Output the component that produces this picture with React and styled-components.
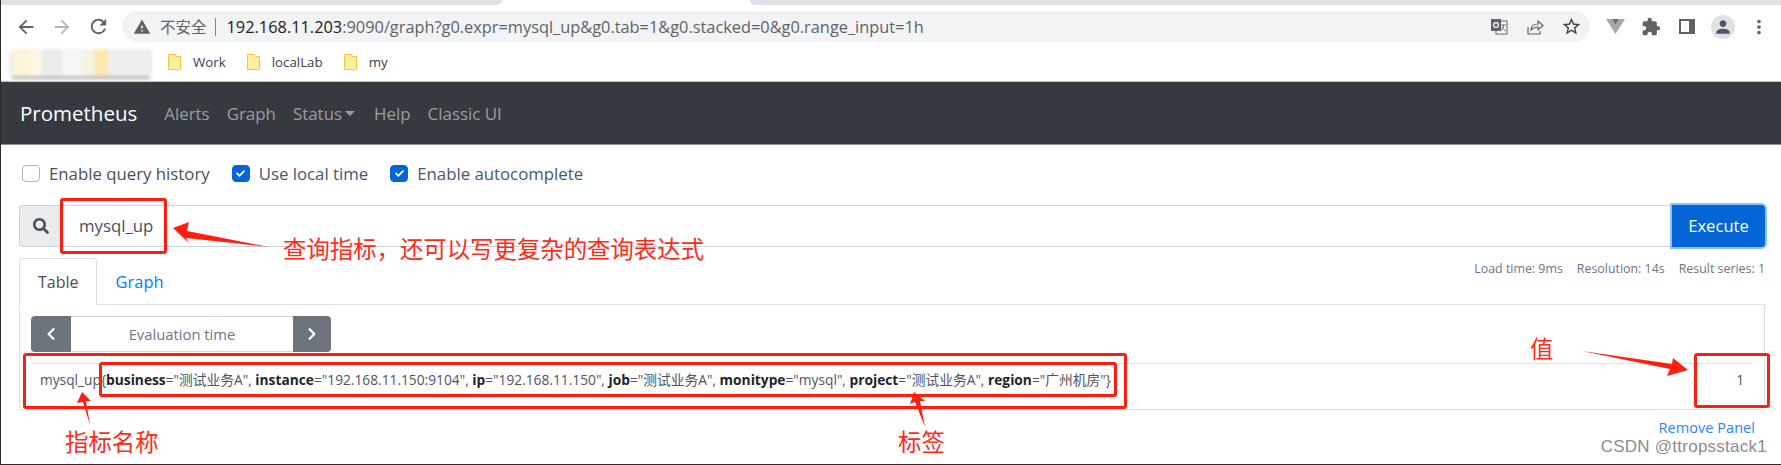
import React from "react";
import styled, { createGlobalStyle } from "styled-components";
import {
  MdArrowBack,
  MdArrowForward,
  MdRefresh,
  MdWarning,
  MdStarBorder,
  MdExtension,
  MdMoreVert,
  MdPerson,
} from "react-icons/md";
import { FaSearch, FaChevronLeft, FaChevronRight, FaCheck } from "react-icons/fa";

const GlobalStyle = createGlobalStyle`
  html, body { margin: 0; padding: 0; background: #fff; }
  * { box-sizing: border-box; }
`;

const Page = styled.div`
  position: relative;
  width: 1781px;
  height: 465px;
  overflow: hidden;
  background: #fff;
  border-left: 1px solid #2b2b2b;
  border-bottom: 1px solid #2b2b2b;
  font-family: "Open Sans", "Noto Sans CJK SC", sans-serif;
  color: #212529;
`;

const TabStrip = styled.div`
  display: flex;
  justify-content: space-between;
  height: 5px;
`;

const TabPiece = styled.div`
  height: 5px;
  width: ${(p) => p.$w}px;
  background: #dee1e6;
  border-bottom-left-radius: ${(p) => (p.$right ? 5 : 0)}px;
  border-bottom-right-radius: ${(p) => (p.$right ? 0 : 5)}px;
`;

const Toolbar = styled.div`
  display: flex;
  align-items: center;
  height: 43px;
  padding-left: 7px;
`;

const ToolIcon = styled.div`
  width: ${(p) => p.$w || 36}px;
  height: 31px;
  flex: none;
  display: flex;
  align-items: center;
  justify-content: center;
  color: ${(p) => p.$color || "#5f6368"};
`;

const AddressBar = styled.div`
  display: flex;
  align-items: center;
  width: 1468px;
  height: 31px;
  margin: 0 7px 0 6px;
  padding: 0 1px 0 11px;
  background: #f1f3f4;
  border-radius: 16px;
`;

const NotSecure = styled.span`
  margin-left: 9px;
  padding-right: 8px;
  border-right: 1px solid #80868b;
  font-size: 15.5px;
  line-height: 18px;
  color: #5f6368;
`;

const Url = styled.span`
  flex: 1;
  margin-left: 11px;
  font-size: 16.35px;
  color: #5f6368;
  white-space: nowrap;
`;

const Host = styled.span`
  color: #202124;
`;

const Avatar = styled.div`
  width: 24px;
  height: 24px;
  border-radius: 50%;
  background: #dfe1e5;
  display: flex;
  align-items: center;
  justify-content: center;
  color: #4a5568;
`;

const BookmarkBar = styled.div`
  display: flex;
  align-items: center;
  height: 33px;
  padding: 0 0 5px 11px;
`;

const BlurredBookmarks = styled.div`
  width: 138px;
  height: 27px;
  margin-right: 18px;
  filter: blur(1.5px);
  box-shadow: 0 3px 3px #b4b4b4;
  background: linear-gradient(
    90deg,
    #fdf3d8 0 18px,
    #fbf6e6 18px 30px,
    #ececec 30px 50px,
    #f6f6f6 50px 70px,
    #f6f3e6 70px 82px,
    #fbe9b0 82px 96px,
    #eeeeee 96px 118px,
    #f1eded 118px
  );
`;

const Bookmark = styled.div`
  display: flex;
  align-items: center;
  gap: 12px;
  margin-right: 21px;
  font-size: 13.3px;
  color: #3c4043;
`;

const Navbar = styled.nav`
  display: flex;
  align-items: center;
  height: 64px;
  padding-left: 19px;
  background: #343a40;
  border-top: 1px solid #c4c6c8;
  border-bottom: 1px solid #8a8d90;
`;

const Brand = styled.span`
  margin-right: 27px;
  font-size: 20.5px;
  color: #fff;
`;

const NavLink = styled.span`
  display: flex;
  align-items: center;
  margin-right: 17px;
  font-size: 16.9px;
  color: rgba(255, 255, 255, 0.5);
`;

const Caret = styled.i`
  margin: 0 2px 0 3px;
  border-top: 5px solid rgba(255, 255, 255, 0.5);
  border-left: 5px solid transparent;
  border-right: 5px solid transparent;
`;

const Content = styled.main`
  padding: 19px 16px 0 18px;
`;

const Options = styled.div`
  display: flex;
  align-items: center;
  height: 18px;
  margin-bottom: 23px;
  padding-left: 3px;
`;

const Option = styled.label`
  display: flex;
  align-items: center;
  gap: 9px;
  margin-right: 22px;
  font-size: 16.8px;
  color: ${(p) => (p.$checked ? "#44586e" : "#495057")};
`;

const CheckBox = styled.span`
  width: 18px;
  height: 17px;
  flex: none;
  display: flex;
  align-items: center;
  justify-content: center;
  border-radius: 4px;
  color: #fff;
  background: ${(p) => (p.$checked ? "#0366d6" : "#fff")};
  border: 1px solid ${(p) => (p.$checked ? "#0366d6" : "#adb5bd")};
`;

const SearchRow = styled.div`
  display: flex;
  height: 42px;
`;

const SearchAddon = styled.div`
  width: 43px;
  display: flex;
  align-items: center;
  justify-content: center;
  color: #495057;
  background: #e9ecef;
  border: 1px solid #ced4da;
  border-right: 0;
  border-radius: 4px 0 0 4px;
`;

const QueryBox = styled.div`
  flex: 1;
  display: flex;
  align-items: center;
  padding: 0 0 1px 16px;
  font-size: 16.8px;
  color: #495057;
  border: 1px solid #ced4da;
  border-right: 0;
`;

const ExecuteButton = styled.button`
  width: 93px;
  padding: 0 0 2px;
  font: inherit;
  font-size: 16.6px;
  color: #fff;
  background: #0366d6;
  border: 0;
  border-radius: 0 4px 4px 0;
  box-shadow: 0 0 0 2px #8fc1f7;
`;

const TabsRow = styled.div`
  display: flex;
  align-items: flex-start;
  justify-content: space-between;
  height: 58px;
  padding-top: 11px;
  border-bottom: 1px solid #dee2e6;
`;

const Tabs = styled.div`
  display: flex;
  height: 47px;
`;

const Tab = styled.div`
  height: 47px;
  display: flex;
  align-items: center;
  padding: 0 17px 0 18px;
  font-size: ${(p) => (p.$active ? 16 : 16.5)}px;
  color: ${(p) => (p.$active ? "#495057" : "#007bff")};
  background: ${(p) => (p.$active ? "#fff" : "transparent")};
  border: 1px solid ${(p) => (p.$active ? "#dee2e6" : "transparent")};
  border-bottom-color: ${(p) => (p.$active ? "#fff" : "transparent")};
  border-radius: 4px 4px 0 0;
`;

const Stats = styled.div`
  display: flex;
  gap: 14px;
  padding-top: 2px;
  font-size: 12.4px;
  color: #6c757d;
`;

const Panel = styled.section`
  height: 105px;
  padding: 11px 11px 0;
  border: 1px solid #dee2e6;
  border-top: 0;
`;

const EvalGroup = styled.div`
  display: flex;
  width: 300px;
  height: 36px;
  margin-bottom: 11px;
`;

const EvalButton = styled.div`
  width: ${(p) => p.$w}px;
  flex: none;
  display: flex;
  align-items: center;
  justify-content: center;
  color: #fff;
  background: #6c757d;
  border-radius: ${(p) => (p.$right ? "0 4px 4px 0" : "4px 0 0 4px")};
`;

const EvalInput = styled.div`
  flex: 1;
  display: flex;
  align-items: center;
  justify-content: center;
  font-size: 14.8px;
  color: #6f777f;
  border-top: 1px solid #ced4da;
  border-bottom: 1px solid #ced4da;
`;

const ResultRow = styled.div`
  display: flex;
  align-items: center;
  justify-content: space-between;
  height: 46px;
  padding: 0 9px 15px 9px;
  border-top: 1px solid #dee2e6;
  font-size: 13.75px;
  white-space: nowrap;
  color: #4f565c;
`;

const LabelName = styled.b`
  color: #212529;
  font-weight: 700;
`;

const RemoveRow = styled.div`
  display: flex;
  justify-content: flex-end;
  padding: 7px 10px 0 0;
  font-size: 14.6px;
  color: #2f86f5;
`;

const Watermark = styled.div`
  position: absolute;
  right: 14px;
  bottom: 7px;
  font-family: "Liberation Sans", sans-serif;
  font-size: 17px;
  letter-spacing: 0.25px;
  color: #8d8d8d;
`;

/* annotation layer, drawn on top of the screenshot */
const MARKS = {
  query: { x: 59, y: 198, w: 107, h: 56 },
  row: { x: 22, y: 353, w: 1104, h: 56 },
  labels: { x: 98, y: 362, w: 1018, h: 35 },
  value: { x: 1693, y: 353, w: 76, h: 55 },
};

const Mark = styled.div`
  position: absolute;
  left: ${(p) => MARKS[p.$name].x}px;
  top: ${(p) => MARKS[p.$name].y}px;
  width: ${(p) => MARKS[p.$name].w}px;
  height: ${(p) => MARKS[p.$name].h}px;
  border: 3px solid #ff1f10;
  border-radius: 3px;
`;

const NOTES = {
  query: { x: 282, y: 232 },
  name: { x: 64, y: 425 },
  labels: { x: 897, y: 425 },
  value: { x: 1529, y: 332 },
};

const Note = styled.span`
  position: absolute;
  left: ${(p) => NOTES[p.$name].x}px;
  top: ${(p) => NOTES[p.$name].y}px;
  font-family: "Noto Sans CJK SC", sans-serif;
  font-size: 23.4px;
  font-weight: 400;
  line-height: 32px;
  white-space: nowrap;
  color: #ff2a1a;
`;

const ArrowLayer = styled.svg`
  position: absolute;
  left: -1px;
  top: 0;
  pointer-events: none;
`;

const ARROWS = [
  "173,228 189,222 187,231 269,247 186,238 189,243",
  "82,392 91,401 86,401 90,425 83,402 77,403",
  "914,392 925,401 920,401 925,427 915,402 910,404",
  "1688,370 1667,376 1670,369 1582,351 1672,364 1673,358",
];

const ShareIcon = () => (
  <svg width="18" height="18" viewBox="0 0 18 18" fill="none" stroke="#5f6368" strokeWidth="1.2">
    <path d="M2 9v7h12v-3" />
    <path d="M5 12c0-4 3-6 7-6V3l5 4.5-5 4.5V9c-3 0-5 1-7 3z" />
  </svg>
);

const TranslateIcon = () => (
  <svg width="17" height="16" viewBox="0 0 17 16">
    <rect x="5" y="2" width="11" height="13" fill="#fff" stroke="#5f6368" />
    <rect x="0" y="0" width="10" height="12" fill="#5f6368" />
    <circle cx="5" cy="6" r="2.4" fill="none" stroke="#fff" strokeWidth="1.2" />
    <path d="M10 6h5M12.500 6c0 3-1.500 5-3 6M11 8c1 2 2 3 4 4" stroke="#5f6368" fill="none" />
  </svg>
);

const VIcon = () => (
  <svg width="19" height="15" viewBox="0 0 19 15">
    <path d="M0 0h6l3.500 6L13 0h6L9.500 15z" fill="#a8a8a8" />
    <path d="M6 0h7L9.500 6z" fill="#6e6e6e" />
  </svg>
);

const SidebarIcon = () => (
  <svg width="16" height="15" viewBox="0 0 16 15">
    <path d="M0 0h16v15H0zM2 2v11h8V2z" fill="#5f6368" fillRule="evenodd" />
    <rect x="10" y="2" width="4" height="11" fill="#5f6368" />
  </svg>
);

const FolderIcon = () => (
  <svg width="13" height="16" viewBox="0 0 13 16">
    <path d="M.5.500h7l1 2h4v13H.5z" fill="#fdeea0" stroke="#f6c445" />
  </svg>
);

const Label = ({ name, value, last }) => (
  <>
    <LabelName>{name}</LabelName>="{value}"{last ? "" : ", "}
  </>
);

export default function App() {
  return (
    <Page>
      <GlobalStyle />
      <TabStrip>
        <TabPiece $w={501} />
        <TabPiece $w={1031} $right />
      </TabStrip>
      <Toolbar>
        <ToolIcon><MdArrowBack size={22} /></ToolIcon>
        <ToolIcon $color="#b4b6b9"><MdArrowForward size={22} /></ToolIcon>
        <ToolIcon><MdRefresh size={23} /></ToolIcon>
        <AddressBar>
          <MdWarning size={18} color="#5f6368" />
          <NotSecure>不安全</NotSecure>
          <Url>
            <Host>192.168.11.203</Host>:9090/graph?g0.expr=mysql_up&amp;g0.tab=1&amp;g0.stacked=0&amp;g0.range_input=1h
          </Url>
          <ToolIcon><TranslateIcon /></ToolIcon>
          <ToolIcon><ShareIcon /></ToolIcon>
          <ToolIcon $color="#3c4043"><MdStarBorder size={21} /></ToolIcon>
        </AddressBar>
        <ToolIcon><VIcon /></ToolIcon>
        <ToolIcon><MdExtension size={20} /></ToolIcon>
        <ToolIcon><SidebarIcon /></ToolIcon>
        <ToolIcon><Avatar><MdPerson size={20} /></Avatar></ToolIcon>
        <ToolIcon><MdMoreVert size={22} /></ToolIcon>
      </Toolbar>
      <BookmarkBar>
        <BlurredBookmarks />
        <Bookmark><FolderIcon />Work</Bookmark>
        <Bookmark><FolderIcon />localLab</Bookmark>
        <Bookmark><FolderIcon />my</Bookmark>
      </BookmarkBar>
      <Navbar>
        <Brand>Prometheus</Brand>
        <NavLink>Alerts</NavLink>
        <NavLink>Graph</NavLink>
        <NavLink>Status<Caret /></NavLink>
        <NavLink>Help</NavLink>
        <NavLink>Classic UI</NavLink>
      </Navbar>
      <Content>
        <Options>
          <Option><CheckBox />Enable query history</Option>
          <Option $checked><CheckBox $checked><FaCheck size={9} /></CheckBox>Use local time</Option>
          <Option $checked><CheckBox $checked><FaCheck size={9} /></CheckBox>Enable autocomplete</Option>
        </Options>
        <SearchRow>
          <SearchAddon><FaSearch size={16} /></SearchAddon>
          <QueryBox>mysql_up</QueryBox>
          <ExecuteButton>Execute</ExecuteButton>
        </SearchRow>
        <TabsRow>
          <Tabs>
            <Tab $active>Table</Tab>
            <Tab>Graph</Tab>
          </Tabs>
          <Stats>
            <span>Load time: 9ms</span>
            <span>Resolution: 14s</span>
            <span>Result series: 1</span>
          </Stats>
        </TabsRow>
        <Panel>
          <EvalGroup>
            <EvalButton $w={40}><FaChevronLeft size={14} /></EvalButton>
            <EvalInput>Evaluation time</EvalInput>
            <EvalButton $w={38} $right><FaChevronRight size={14} /></EvalButton>
          </EvalGroup>
          <ResultRow>
            <span>
              mysql_up{"{"}
              <Label name="business" value="测试业务A" />
              <Label name="instance" value="192.168.11.150:9104" />
              <Label name="ip" value="192.168.11.150" />
              <Label name="job" value="测试业务A" />
              <Label name="monitype" value="mysql" />
              <Label name="project" value="测试业务A" />
              <Label name="region" value="广州机房" last />
              {"}"}
            </span>
            <span>1</span>
          </ResultRow>
        </Panel>
        <RemoveRow>Remove Panel</RemoveRow>
      </Content>
      <Mark $name="query" />
      <Mark $name="row" />
      <Mark $name="labels" />
      <Mark $name="value" />
      <ArrowLayer width="1781" height="465" viewBox="0 0 1781 465">
        {ARROWS.map((points) => (
          <polygon key={points} points={points} fill="#ff1f10" />
        ))}
      </ArrowLayer>
      <Note $name="query">查询指标，还可以写更复杂的查询表达式</Note>
      <Note $name="name">指标名称</Note>
      <Note $name="labels">标签</Note>
      <Note $name="value">值</Note>
      <Watermark>CSDN @ttropsstack1</Watermark>
    </Page>
  );
}
